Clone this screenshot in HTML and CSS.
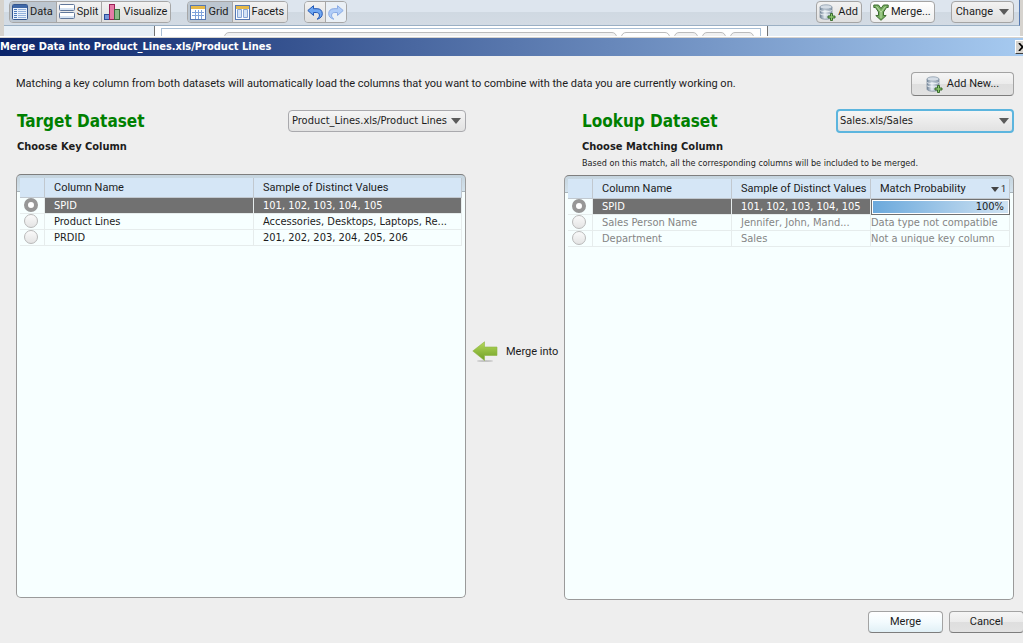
FILE: index.html
```html
<!DOCTYPE html>
<html lang="en">
<head>
    <meta charset="UTF-8">
    <meta name="viewport" content="width=device-width, initial-scale=1.0">
    <title>Merge Data into Product_Lines.xls/Product Lines</title>
    <link rel="stylesheet" href="styles.css">
</head>
<body>
    <!-- shared icons -->
    <svg class="icon-defs" aria-hidden="true">
        <defs>
            <linearGradient id="db-fill" x1="0" x2="1" y1="0" y2="0">
                <stop offset="0" stop-color="#6f8196"/>
                <stop offset=".4" stop-color="#e3eaf1"/>
                <stop offset="1" stop-color="#8696a8"/>
            </linearGradient>
            <linearGradient id="arrow-fill" x1="0" x2="0" y1="0" y2="1">
                <stop offset="0" stop-color="#b5d95a"/>
                <stop offset="1" stop-color="#6f9f26"/>
            </linearGradient>
        </defs>
        <symbol id="icon-database" viewBox="0 0 17 17">
            <path d="M1 3v10c0 1.400 2.500 2.200 6 2.200s6-.8 6-2.200V3z" fill="url(#db-fill)" stroke="#75869a" stroke-width=".7"/>
            <ellipse cx="7" cy="3" rx="6" ry="2.200" fill="#d5dde6" stroke="#8393a5" stroke-width=".7"/>
            <path d="M1 6.300c1 1.800 11 1.800 12 0M1 9.600c1 1.800 11 1.800 12 0" fill="none" stroke="#f4f7fa" stroke-width=".8"/>
            <path d="M11.500 9.500h2v2.500H16v2h-2.500v2.500h-2V14H9v-2h2.500z" fill="#8cc56c" stroke="#2f6425" stroke-width=".9"/>
        </symbol>
    </svg>

    <header class="app">
        <div class="toolbar">
            <div class="group">
                <button type="button" class="tool active">
                    <svg width="16" height="16" viewBox="0 0 16 16"><rect x=".5" y=".5" width="15" height="15" rx="1" fill="#e9f1fb" stroke="#33558f"/><path d="M1 1h14v3H1z" fill="#3f68a8"/><path d="M2 5.500h3M2 7.500h3M2 9.500h3M2 11.500h3M2 13.500h3" stroke="#4a79bb"/><path d="M6 5.500h8M6 7.500h8M6 9.500h8M6 11.500h8M6 13.500h8" stroke="#93b1dc"/></svg>
                    Data
                </button>
                <button type="button" class="tool">
                    <svg width="16" height="16" viewBox="0 0 16 16"><rect x=".5" y=".5" width="15" height="6" rx="1" fill="#fff" stroke="#60779b"/><rect x=".5" y="8.500" width="15" height="6" rx="1" fill="#fff" stroke="#60779b"/><path d="M1 5h14M1 13h14" stroke="#d5e2f2" stroke-width="2"/></svg>
                    Split
                </button>
                <button type="button" class="tool">
                    <svg width="17" height="16" viewBox="0 0 17 16"><rect x=".5" y="10.500" width="5" height="5" fill="#7796d8" stroke="#294c99"/><rect x="5.500" y=".5" width="5" height="15" fill="#e57ba6" stroke="#9b1f55"/><rect x="10.500" y="5.500" width="5" height="10" fill="#8ab987" stroke="#3b6c3e"/></svg>
                    Visualize
                </button>
            </div>
            <div class="group">
                <button type="button" class="tool active">
                    <svg width="16" height="15" viewBox="0 0 16 15"><rect x=".5" y=".5" width="15" height="14" fill="#fff" stroke="#5578b3"/><path d="M1 1h14v3H1z" fill="#e6b94a"/><path d="M2 7.500h12M2 10.500h12M5.500 5v9M8.500 5v9M11.500 5v9" stroke="#7fa3db"/></svg>
                    Grid
                </button>
                <button type="button" class="tool">
                    <svg width="15" height="15" viewBox="0 0 15 15"><rect x=".5" y=".5" width="14" height="14" fill="#fff" stroke="#5578b3"/><path d="M1 1h13v3H1z" fill="#e6b94a"/><path d="M3 5h3v8H3zM9 5h3v8H9z" fill="#d5e3f6"/><path d="M6.500 4.500v8h-4v-8zM12.500 4.500v8h-4v-8z" fill="none" stroke="#86a5d5"/></svg>
                    Facets
                </button>
            </div>
            <div class="group">
                <button type="button" class="tool square" aria-label="Undo">
                    <svg width="16" height="15" viewBox="0 0 16 15"><path d="M.8 5.500 6.500.7v3h3.600c3.200 0 5.200 2 5.200 5 0 2.700-1.800 4.800-5.200 5.500 1.800-1.400 2.500-2.700 2.300-4.200-.2-1.700-1.300-2.500-3.200-2.500H6.500v3z" fill="#6fa7f2" stroke="#2358b5"/></svg>
                </button>
                <button type="button" class="tool square faded" aria-label="Redo">
                    <svg width="16" height="15" viewBox="0 0 16 15"><path d="M15.200 5.500 9.500.7v3H5.900C2.700 3.700.7 5.700.7 8.700c0 2.700 1.800 4.800 5.200 5.500-1.800-1.400-2.500-2.700-2.300-4.200.2-1.700 1.300-2.500 3.200-2.500h2.700v3z" fill="#b0cdf8" stroke="#8aabe4"/></svg>
                </button>
            </div>
            <div class="actions">
                <button type="button" class="tool">
                    <svg width="17" height="17"><use href="#icon-database"/></svg>
                    Add
                </button>
                <button type="button" class="tool light">
                    <svg width="16" height="17" viewBox="0 0 16 17"><path d="M.8 1h4.700L8 4.500 10.500 1h4.700v2.500h-1.700L10.500 8v3.500h2.700L8 16.300l-5.200-4.800h2.700V8l-3-4.500H.8z" fill="#79b062" stroke="#3d6b31"/><path d="M3.500 2.500 8 8l4.500-5.500M8 8v6" fill="none" stroke="#bcdcaa"/></svg>
                    Merge...
                </button>
                <button type="button" class="tool change">
                    Change
                    <svg width="10" height="6" viewBox="0 0 10 6"><path d="M0 0h10L5 6z" fill="#5b5b5b"/></svg>
                </button>
            </div>
        </div>
        <div class="canvas">
            <div class="sheet">
                <div class="tabs">
                    <span class="tab first"></span>
                    <span class="tab wide"></span>
                    <span class="tab"></span>
                    <span class="tab"></span>
                    <span class="tab"></span>
                </div>
            </div>
        </div>
    </header>

    <section class="dialog" role="dialog" aria-labelledby="dialog-title">
        <div class="titlebar">
            <h1 id="dialog-title">Merge Data into Product_Lines.xls/Product Lines</h1>
            <button type="button" class="close" aria-label="Close">
                <svg width="9" height="8" viewBox="0 0 9 8"><path d="M1 0l7 8M8 0L1 8" stroke="#000" stroke-width="1.700"/></svg>
            </button>
        </div>

        <div class="intro">
            <p>Matching a key column from both datasets will automatically load the columns that you want to combine with the data you are currently working on.</p>
            <button type="button" class="btn add-new">
                <svg width="17" height="17"><use href="#icon-database"/></svg>
                Add New...
            </button>
        </div>

        <div class="merge">
            <div class="dataset target">
                <div class="head">
                    <h2><label for="target">Target Dataset</label></h2>
                    <div class="picker">
                        <select id="target">
                            <option>Product_Lines.xls/Product Lines</option>
                        </select>
                    </div>
                </div>
                <h3>Choose Key Column</h3>
                <div class="panel">
                    <table>
                        <colgroup>
                            <col class="col-radio">
                            <col class="col-name">
                            <col>
                        </colgroup>
                        <thead>
                            <tr>
                                <th></th>
                                <th>Column Name</th>
                                <th>Sample of Distinct Values</th>
                            </tr>
                        </thead>
                        <tbody>
                            <tr class="selected">
                                <td><input type="radio" name="key" aria-label="SPID" checked></td>
                                <td>SPID</td>
                                <td>101, 102, 103, 104, 105</td>
                            </tr>
                            <tr>
                                <td><input type="radio" name="key" aria-label="Product Lines"></td>
                                <td>Product Lines</td>
                                <td>Accessories, Desktops, Laptops, Re...</td>
                            </tr>
                            <tr>
                                <td><input type="radio" name="key" aria-label="PRDID"></td>
                                <td>PRDID</td>
                                <td>201, 202, 203, 204, 205, 206</td>
                            </tr>
                        </tbody>
                    </table>
                </div>
            </div>

            <div class="direction">
                <svg width="26" height="22" viewBox="0 0 26 22"><ellipse cx="13" cy="20" rx="8" ry="1" fill="#c4c4c4"/><path d="M.8 10 12.500.8V6H25v8.500H12.500v5z" fill="url(#arrow-fill)" stroke="#8fb544" stroke-width=".6"/></svg>
                <span>Merge into</span>
            </div>

            <div class="dataset lookup">
                <div class="head">
                    <h2><label for="lookup">Lookup Dataset</label></h2>
                    <div class="picker focused">
                        <select id="lookup">
                            <option>Sales.xls/Sales</option>
                        </select>
                    </div>
                </div>
                <h3>Choose Matching Column</h3>
                <p class="hint">Based on this match, all the corresponding columns will be included to be merged.</p>
                <div class="panel">
                    <table>
                        <colgroup>
                            <col class="col-radio">
                            <col class="col-third">
                            <col class="col-third">
                            <col>
                        </colgroup>
                        <thead>
                            <tr>
                                <th></th>
                                <th>Column Name</th>
                                <th>Sample of Distinct Values</th>
                                <th>
                                    <div class="sorted">
                                        Match Probability
                                        <span class="sort"><svg width="8" height="5" viewBox="0 0 8 5"><path d="M0 0h8L4 5z" fill="#444"/></svg><small>1</small></span>
                                    </div>
                                </th>
                            </tr>
                        </thead>
                        <tbody>
                            <tr class="selected">
                                <td><input type="radio" name="match" aria-label="SPID" checked></td>
                                <td>SPID</td>
                                <td>101, 102, 103, 104, 105</td>
                                <td class="prob"><div class="bar">100%</div></td>
                            </tr>
                            <tr class="unavailable">
                                <td><input type="radio" name="match" aria-label="Sales Person Name"></td>
                                <td>Sales Person Name</td>
                                <td>Jennifer, John, Mand...</td>
                                <td class="prob">Data type not compatible</td>
                            </tr>
                            <tr class="unavailable">
                                <td><input type="radio" name="match" aria-label="Department"></td>
                                <td>Department</td>
                                <td>Sales</td>
                                <td class="prob">Not a unique key column</td>
                            </tr>
                        </tbody>
                    </table>
                </div>
            </div>
        </div>

        <div class="footer">
            <button type="button" class="btn primary">Merge</button>
            <button type="button" class="btn">Cancel</button>
        </div>
    </section>
</body>
</html>
```

FILE: styles.css
```css
* {
    margin: 0;
    padding: 0;
    box-sizing: border-box;
}

body {
    min-height: 100vh;
    display: flex;
    flex-direction: column;
    overflow-x: hidden;
    background: #eeeeee;
    color: #1c1c1c;
    font-family: Roboto, Tahoma, sans-serif;
    font-size: 11px;
    line-height: 16px;
}

button, select, input {
    font: inherit;
    color: inherit;
}

h1, h2, h3, .hint, td, select {
    font-family: "DejaVu Sans Condensed", Tahoma, sans-serif;
}

svg {
    display: block;
    flex: none;
}

.icon-defs {
    position: absolute;
    width: 0;
    height: 0;
}

/* application behind the dialog */
.app {
    border-left: 4px solid #d6d3ce;
    border-right: 3px solid #d6d3ce;
    background: #e6eef5;
}

.toolbar {
    display: flex;
    align-items: flex-start;
    gap: 16px;
    height: 26px;
    padding: 1px 5px 0;
    border-bottom: 1px solid #9bb0c4;
    border-right: 1px solid #5579b0;
    background: linear-gradient(#dde5ee 0, #dde5ee 50%, #d0d9e2 50%, #d3dbe4 100%);
}

.group {
    display: flex;
    border: 1px solid #a7a7a7;
    border-radius: 4px;
    overflow: hidden;
}

.tool {
    display: flex;
    align-items: center;
    gap: 2px;
    height: 20px;
    padding: 0 3px 0 2px;
    border: none;
    border-right: 1px solid #a7a7a7;
    background: linear-gradient(#f2f2f2, #dfdfdf);
    white-space: nowrap;
}

.group .tool:last-child {
    border-right: none;
}

.tool.active {
    background: #bcc6d0;
}

.tool.square {
    padding: 0 2px;
}

.tool.faded {
    background: #eaf0f6;
}

.actions {
    display: flex;
    gap: 8px;
    margin-left: auto;
}

.actions .tool {
    height: 22px;
    border: 1px solid #a5a5a5;
    border-radius: 4px;
}

.actions .light {
    background: linear-gradient(#ffffff, #eeeeee);
}

.actions .change {
    gap: 6px;
    margin-left: 8px;
    padding: 0 4px;
}

.canvas {
    height: 10px;
    padding: 0 252px 0 150px;
    overflow: hidden;
}

.sheet {
    height: 20px;
    padding: 2px 6px 0;
    border-left: 1px solid #737373;
    border-right: 1px solid #737373;
    background: #ffffff;
}

.tabs {
    display: flex;
    gap: 4px;
    height: 20px;
    padding: 3px 6px 0 62px;
    border: 1px solid #a9bfd5;
}

.tab {
    width: 24px;
    border: 1px solid #bcbcbc;
    border-radius: 5px;
    background: #f1f1f1;
}

.tab.first {
    flex: 1;
}

.tab.wide {
    width: 49px;
    background: #ffffff;
}

/* dialog */
.dialog {
    flex: 1;
    display: flex;
    flex-direction: column;
    border-top: 1px solid #ffffff;
}

.titlebar {
    display: flex;
    align-items: center;
    justify-content: space-between;
    height: 19px;
    border-top: 1px solid #d6d3ce;
    background: linear-gradient(to right, #0a246a, #a6caf0);
    color: #ffffff;
}

.titlebar h1 {
    font-size: 11px;
    font-weight: bold;
}

.close {
    width: 16px;
    height: 14px;
    margin-right: -8px;
    padding: 2px;
    border: 1px solid;
    border-color: #ffffff #404040 #404040 #ffffff;
    background: #d6d3ce;
}

.btn {
    display: flex;
    align-items: center;
    justify-content: center;
    gap: 4px;
    width: 75px;
    height: 22px;
    border: 1px solid #a3a3a3;
    border-bottom-color: #7d7d7d;
    border-radius: 4px;
    background: linear-gradient(#f5f5f5, #ebebeb 50%, #dedede 50%, #e2e2e2);
}

.btn.add-new {
    width: 103px;
    height: 24px;
}

.btn.primary {
    background: linear-gradient(#ffffff, #f3fbfe 50%, #e1f0f6);
}

.intro {
    display: flex;
    align-items: center;
    justify-content: space-between;
    padding: 16px 9px 12px 16px;
}

.merge {
    flex: 1;
    display: grid;
    grid-template-columns: 1fr 98px 1fr;
    padding: 0 9px 0 16px;
}

.dataset {
    display: flex;
    flex-direction: column;
    min-width: 0;
}

.target {
    padding-bottom: 2px;
}

.head {
    display: flex;
    align-items: center;
    justify-content: space-between;
    height: 26px;
}

h2 {
    color: #008000;
    font-size: 17px;
    line-height: 24px;
}

h3 {
    margin-top: 5px;
    font-size: 11px;
}

.target h2, .target h3 {
    padding-left: 1px;
}

.target .panel {
    margin-top: 19px;
}

.lookup h2, .lookup h3, .hint {
    padding-left: 18px;
}

.hint {
    font-size: 9px;
}

.lookup .panel {
    margin-top: 4px;
}

.picker {
    position: relative;
    width: 178px;
}

.picker::after {
    content: "";
    position: absolute;
    top: 50%;
    right: 5px;
    margin-top: -3px;
    border: 5px solid transparent;
    border-top: 6px solid #5b5b5b;
    border-bottom: none;
    pointer-events: none;
}

.picker select {
    display: block;
    width: 100%;
    height: 22px;
    padding: 0 18px 0 3px;
    border: 1px solid #a9a9ad;
    border-radius: 4px;
    background: linear-gradient(#f5f5f5, #e2e2e2);
    appearance: none;
}

.picker.focused select {
    height: 24px;
    border: 2px solid #5cb5de;
    padding-left: 2px;
}

.panel {
    flex: 1;
    padding: 3px;
    border: 1px solid #9a9a9a;
    border-top-color: #7e7e7e;
    border-radius: 5px;
    background: linear-gradient(#c5d4de 0, #d3e2ec 16px, #a8b4bb 16px, #a8b4bb 17px, #f7ffff 17px);
}

table {
    width: 100%;
    border-collapse: separate;
    border-spacing: 0;
    table-layout: fixed;
    background: #f7ffff;
}

.col-radio {
    width: 25px;
}

.col-name {
    width: 209px;
}

.col-third {
    width: 139px;
}

th {
    height: 20px;
    padding: 1px 0 0 9px;
    border-right: 1px solid #c1c8cf;
    border-bottom: 1px solid #c1c8cf;
    background: #d5e6f6;
    font-weight: normal;
    text-align: left;
    white-space: nowrap;
}

td {
    height: 16px;
    padding: 0 0 0 9px;
    border-right: 1px solid #e6ecec;
    border-bottom: 1px solid #e6ecec;
    line-height: 15px;
    vertical-align: top;
    white-space: nowrap;
    overflow: hidden;
}

td:first-child {
    padding: 0 0 0 4px;
}

td input {
    display: block;
    width: 14px;
    height: 14px;
    border: 1px solid #b9b9b9;
    border-radius: 50%;
    background: linear-gradient(#fafafa, #e4e4e4);
    appearance: none;
}

td input:checked {
    border: 4px solid #979797;
    background: #ffffff;
}

.selected td:not(:first-child) {
    background: #717171;
    color: #ffffff;
}

.unavailable {
    color: #858585;
}

td.prob {
    padding: 0;
}

.selected td.prob:last-child {
    padding: 1px;
    border: none;
    background: #717171;
    color: #1c1c1c;
}

.bar {
    height: 14px;
    padding-right: 4px;
    border: 1px solid #ffffff;
    background: linear-gradient(to right, #6ba9dc, #cfe2f2);
    line-height: 12px;
    text-align: right;
}

.sorted, .sort {
    display: flex;
    align-items: center;
}

.sorted {
    justify-content: space-between;
    padding-right: 3px;
}

.sort {
    gap: 2px;
}

.sort small {
    font-size: 9px;
    line-height: 12px;
}

.direction {
    display: flex;
    align-items: center;
    align-self: center;
    gap: 8px;
    margin-top: -4px;
    padding-left: 6px;
    white-space: nowrap;
}

.footer {
    display: flex;
    justify-content: flex-end;
    gap: 6px;
    margin-right: -1px;
    padding: 11px 0 10px;
}
```
